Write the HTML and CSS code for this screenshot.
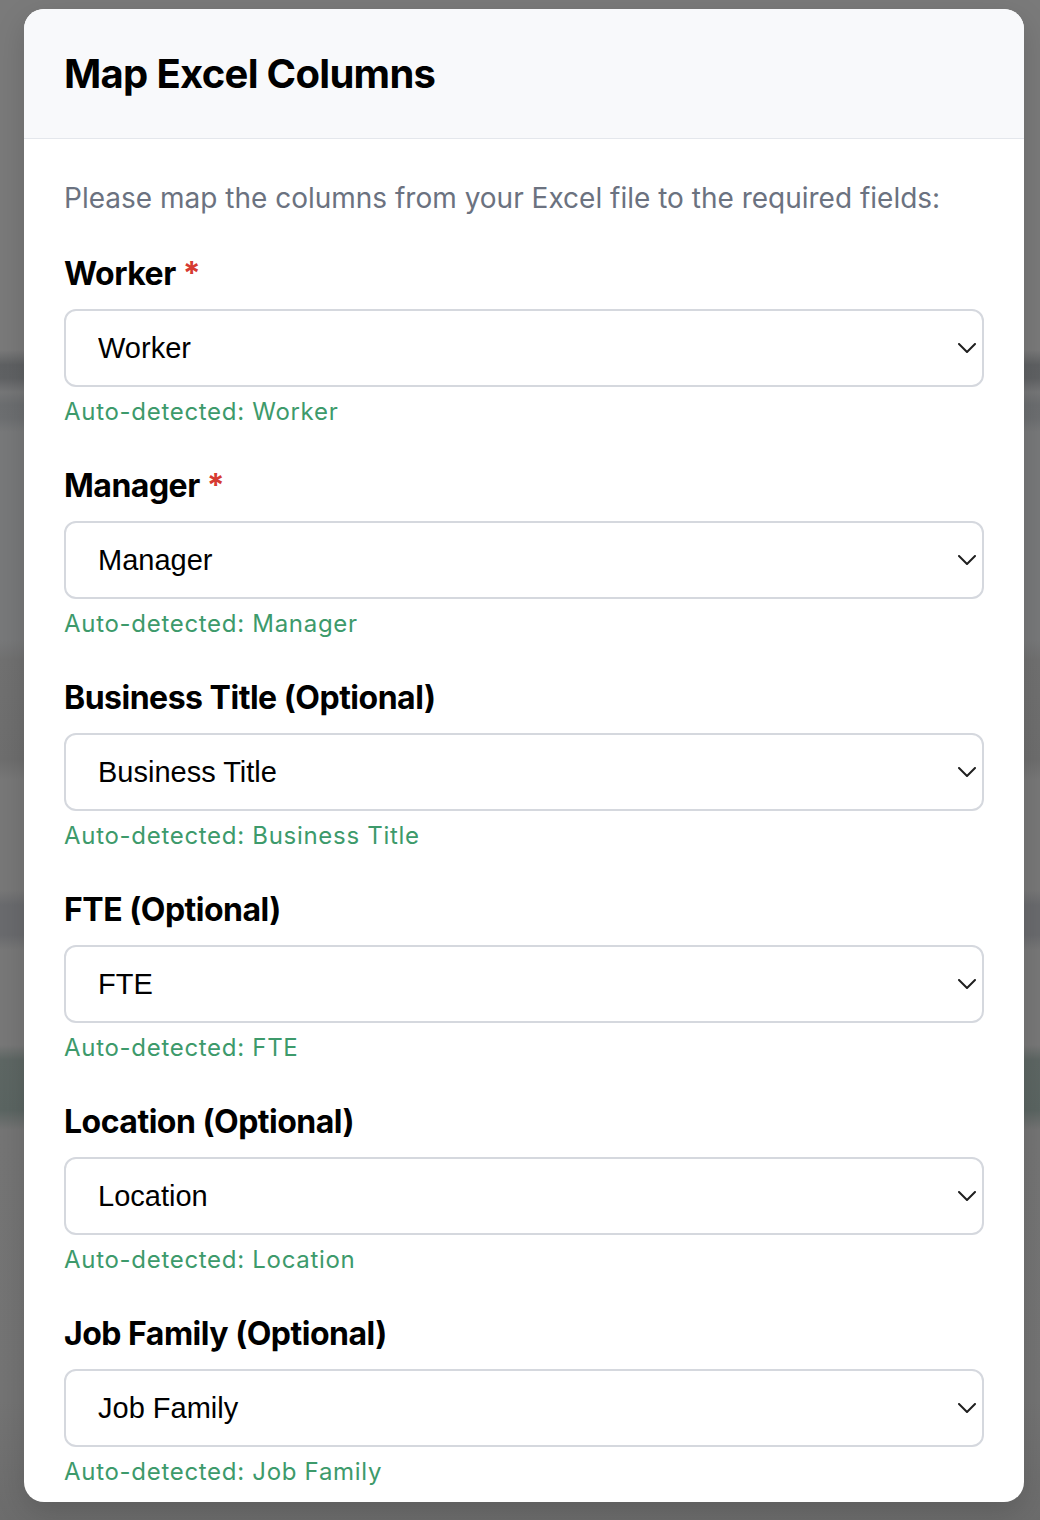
FILE: index.html
```html
<!DOCTYPE html>
<html lang="en">
<head>
<meta charset="utf-8">
<title>Map Excel Columns</title>
<link rel="stylesheet" href="styles.css">
</head>
<body>
<div class="backdrop">
  <div class="modal">
    <div class="modal-header">
      <h2 class="modal-title">Map Excel Columns</h2>
    </div>
    <div class="modal-body">
      <p class="intro">Please map the columns from your Excel file to the required fields:</p>

      <div class="field">
        <label class="field-label">Worker <span class="required">*</span></label>
        <div class="select-wrap">
          <select class="select"><option>Worker</option></select>
          <svg class="chevron" width="18" height="10" viewBox="0 0 18 10"><path d="M1 1 L9 9 L17 1" fill="none" stroke="#1f1f1f" stroke-width="2" stroke-linecap="round" stroke-linejoin="round"/></svg>
        </div>
        <div class="hint">Auto-detected: Worker</div>
      </div>

      <div class="field">
        <label class="field-label">Manager <span class="required">*</span></label>
        <div class="select-wrap">
          <select class="select"><option>Manager</option></select>
          <svg class="chevron" width="18" height="10" viewBox="0 0 18 10"><path d="M1 1 L9 9 L17 1" fill="none" stroke="#1f1f1f" stroke-width="2" stroke-linecap="round" stroke-linejoin="round"/></svg>
        </div>
        <div class="hint">Auto-detected: Manager</div>
      </div>

      <div class="field">
        <label class="field-label">Business Title (Optional)</label>
        <div class="select-wrap">
          <select class="select"><option>Business Title</option></select>
          <svg class="chevron" width="18" height="10" viewBox="0 0 18 10"><path d="M1 1 L9 9 L17 1" fill="none" stroke="#1f1f1f" stroke-width="2" stroke-linecap="round" stroke-linejoin="round"/></svg>
        </div>
        <div class="hint">Auto-detected: Business Title</div>
      </div>

      <div class="field">
        <label class="field-label">FTE (Optional)</label>
        <div class="select-wrap">
          <select class="select"><option>FTE</option></select>
          <svg class="chevron" width="18" height="10" viewBox="0 0 18 10"><path d="M1 1 L9 9 L17 1" fill="none" stroke="#1f1f1f" stroke-width="2" stroke-linecap="round" stroke-linejoin="round"/></svg>
        </div>
        <div class="hint">Auto-detected: FTE</div>
      </div>

      <div class="field">
        <label class="field-label">Location (Optional)</label>
        <div class="select-wrap">
          <select class="select"><option>Location</option></select>
          <svg class="chevron" width="18" height="10" viewBox="0 0 18 10"><path d="M1 1 L9 9 L17 1" fill="none" stroke="#1f1f1f" stroke-width="2" stroke-linecap="round" stroke-linejoin="round"/></svg>
        </div>
        <div class="hint">Auto-detected: Location</div>
      </div>

      <div class="field">
        <label class="field-label">Job Family (Optional)</label>
        <div class="select-wrap">
          <select class="select"><option>Job Family</option></select>
          <svg class="chevron" width="18" height="10" viewBox="0 0 18 10"><path d="M1 1 L9 9 L17 1" fill="none" stroke="#1f1f1f" stroke-width="2" stroke-linecap="round" stroke-linejoin="round"/></svg>
        </div>
        <div class="hint">Auto-detected: Job Family</div>
      </div>
    </div>
  </div>
</div>
</body>
</html>
```

FILE: styles.css
```css
* { box-sizing: border-box; }

html, body {
  margin: 0;
  padding: 0;
}

body {
  font-family: Inter, "Noto Sans", "Liberation Sans", sans-serif;
  color: #000;
  background-color: #797979;
  background-image: linear-gradient(to bottom,
    #7a7a7a 0px, #7a7a7a 350px,
    #5f6163 365px, #606264 378px,
    #767778 392px, #6c6e70 405px, #6d6f71 418px,
    #78797a 432px, #78797a 640px,
    #717171 660px, #6e6e6e 760px,
    #787878 780px, #787878 890px,
    #6a6b6e 905px, #6a6b6e 935px,
    #787878 950px, #787878 1045px,
    #5e6764 1060px, #5b6562 1110px,
    #757575 1130px, #747474 1400px,
    #6c6c6c 1520px);
}

.backdrop {
  width: 1040px;
  height: 1520px;
  padding: 9px 24px 0 24px;
  overflow: hidden;
}

.modal {
  width: 1000px;
  height: 1493px;
  background: #ffffff;
  border-radius: 20px;
  overflow: hidden;
  box-shadow: 0 10px 30px rgba(0, 0, 0, 0.15);
}

.modal-header {
  background: #f8f9fb;
  border-bottom: 1px solid #e4e7ec;
  padding: 40px 40px 40px 40px;
}

.modal-title {
  margin: 0;
  font-size: 40px;
  line-height: 49px;
  font-weight: 700;
  color: #000;
  letter-spacing: -0.7px;
}

.modal-body {
  padding: 38px 40px 40px 40px;
}

.intro {
  margin: 0 0 30px 0;
  font-size: 28px;
  line-height: 42px;
  color: #6b7280;
  font-weight: 400;
}

.field {
  display: flex;
  flex-direction: column;
  margin-bottom: 32px;
}

.field-label {
  display: block;
  font-size: 32px;
  line-height: 48px;
  font-weight: 650;
  color: #000;
  margin-bottom: 11px;
  margin-top: 1px;
  letter-spacing: -0.5px;
}

.required {
  color: #d63b32;
}

.select-wrap {
  position: relative;
}

.select {
  display: block;
  width: 100%;
  height: 78px;
  -webkit-appearance: none;
  appearance: none;
  background: #ffffff;
  border: 2px solid #d5d8de;
  border-radius: 12px;
  padding: 0 60px 0 32px;
  font-family: "Liberation Sans", Arial, sans-serif;
  font-size: 29px;
  color: #000;
  outline: none;
}

.chevron {
  position: absolute;
  right: 8px;
  top: 34px;
  pointer-events: none;
}

.hint {
  margin-top: 8px;
  font-size: 24px;
  line-height: 34px;
  letter-spacing: 0.7px;
  color: #3d9a6b;
}
```
